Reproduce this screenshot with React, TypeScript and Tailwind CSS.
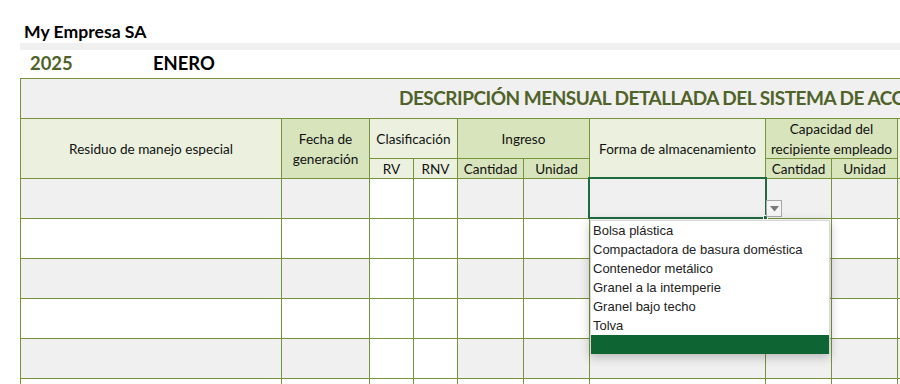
import React from 'react';

const LIGHT = 'bg-[#ebf1de]';
const DARK = 'bg-[#d8e4bc]';

const opciones = [
  'Bolsa plástica',
  'Compactadora de basura doméstica',
  'Contenedor metálico',
  'Granel a la intemperie',
  'Granel bajo techo',
  'Tolva',
];

// columnas del cuerpo: true = siempre blanca (RV / RNV)
const cols = [false, false, true, true, false, false, false, false, false, false];

const HeadCell: React.FC<{ className: string; children?: React.ReactNode }> = ({ className, children }) => (
  <div className={`flex items-center justify-center text-center text-[13.6px] leading-[20px] text-[#111] ${className}`}>
    {children}
  </div>
);

const App: React.FC = () => {
  return (
    <div className="w-[900px] h-[384px] overflow-hidden bg-white relative font-['Lato',_'Open_Sans',_sans-serif]">
      <div className="pl-6 pt-[21px] h-[43px] text-[17.6px] font-bold text-black leading-[22px]">My Empresa SA</div>
      <div className="ml-5 h-[7px] bg-[#f0f0f0]"></div>
      <div className="flex items-center h-[28px] text-[18.4px] font-bold">
        <span className="ml-[30px] w-[123px] text-[#4f6228]">2025</span>
        <span className="text-black">ENERO</span>
      </div>

      <div className="relative ml-5 w-[1100px]">
        <div className="grid gap-px bg-[#77933c] p-px grid-cols-[260px_87px_43px_43px_65px_65px_175px_65px_65px_200px] grid-rows-[39px_39px_19px_39px_39px_39px_39px_39px_39px]">
          {/* título */}
          <div className="col-span-10 bg-[#f0f0f0] flex items-center pl-[378px] whitespace-nowrap text-[19px] font-bold text-[#4f6228] tracking-[-0.5px]">
            DESCRIPCIÓN MENSUAL DETALLADA DEL SISTEMA DE ACOPIO
          </div>

          {/* encabezados */}
          <HeadCell className={`row-span-2 ${LIGHT}`}>Residuo de manejo especial</HeadCell>
          <HeadCell className={`row-span-2 ${DARK}`}>Fecha de<br />generación</HeadCell>
          <HeadCell className={`col-span-2 ${LIGHT}`}>Clasificación</HeadCell>
          <HeadCell className={`col-span-2 ${DARK}`}>Ingreso</HeadCell>
          <HeadCell className={`row-span-2 ${LIGHT}`}>Forma de almacenamiento</HeadCell>
          <HeadCell className={`col-span-2 ${DARK}`}>Capacidad del<br />recipiente empleado</HeadCell>
          <HeadCell className={`row-span-2 ${LIGHT}`}></HeadCell>
          <HeadCell className={LIGHT}>RV</HeadCell>
          <HeadCell className={LIGHT}>RNV</HeadCell>
          <HeadCell className={DARK}>Cantidad</HeadCell>
          <HeadCell className={DARK}>Unidad</HeadCell>
          <HeadCell className={DARK}>Cantidad</HeadCell>
          <HeadCell className={DARK}>Unidad</HeadCell>

          {/* cuerpo */}
          {[0, 1, 2, 3, 4, 5].map((r) =>
            cols.map((white, c) => (
              <div key={`${r}-${c}`} className={white || r % 2 === 1 ? 'bg-white' : 'bg-[#f0f0f0]'}></div>
            ))
          )}
        </div>

        {/* celda seleccionada */}
        <div className="absolute left-[568px] top-[99px] w-[179px] h-[42px] border-2 border-[#1e6b3f]"></div>
        <div className="absolute left-[743px] top-[137px] w-[5px] h-[5px] bg-[#1e6b3f] border border-white"></div>
        <div className="absolute left-[746px] top-[122px] w-[16px] h-[17px] bg-[#f5f5f5] border border-[#a8a8a8] flex items-center justify-center">
          <svg width="9" height="6" viewBox="0 0 9 6">
            <path d="M0 0 H9 L4.5 5.5 Z" fill="#7a7a7a" />
          </svg>
        </div>

        {/* lista desplegable */}
        <div className="absolute left-[570px] top-[142px] w-[240px] h-[134px] bg-white border border-[#d8d8d8] shadow-[0_3px_10px_rgba(0,0,0,0.25)] font-['Liberation_Sans',_Arial,_sans-serif] text-[13px] text-[#222]">
          {opciones.map((o) => (
            <div key={o} className="h-[19px] leading-[19px] pl-[2px] whitespace-nowrap">{o}</div>
          ))}
          <div className="h-[19px] bg-[#0e6433]"></div>
        </div>
      </div>
    </div>
  );
};

export default App;
